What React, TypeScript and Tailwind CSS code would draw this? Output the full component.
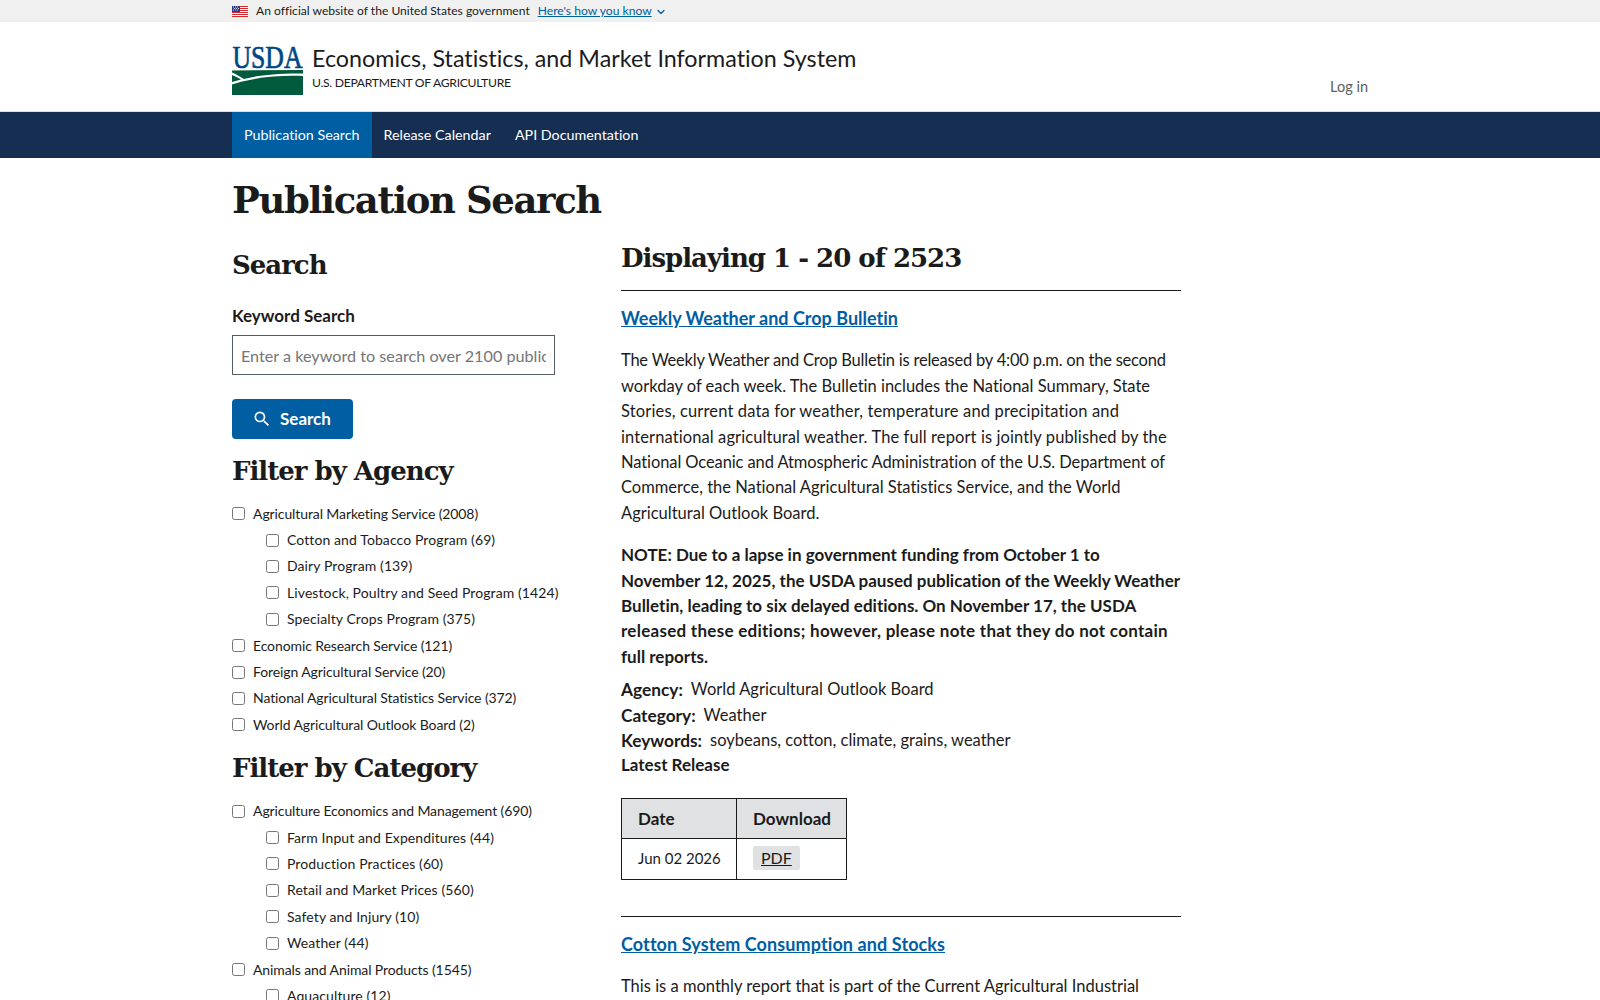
import { ChevronDown } from "lucide-react";

const sans = "font-['Lato',sans-serif] [font-variant-ligatures:none]";
const h2 = "font-['DejaVu_Serif',serif] font-bold text-[26px] tracking-[-1px] leading-[36px]";

type FilterItem = { label: string; nested?: boolean };

const agencies: FilterItem[] = [
  { label: "Agricultural Marketing Service (2008)" },
  { label: "Cotton and Tobacco Program (69)", nested: true },
  { label: "Dairy Program (139)", nested: true },
  { label: "Livestock, Poultry and Seed Program (1424)", nested: true },
  { label: "Specialty Crops Program (375)", nested: true },
  { label: "Economic Research Service (121)" },
  { label: "Foreign Agricultural Service (20)" },
  { label: "National Agricultural Statistics Service (372)" },
  { label: "World Agricultural Outlook Board (2)" },
];

const categories: FilterItem[] = [
  { label: "Agriculture Economics and Management (690)" },
  { label: "Farm Input and Expenditures (44)", nested: true },
  { label: "Production Practices (60)", nested: true },
  { label: "Retail and Market Prices (560)", nested: true },
  { label: "Safety and Injury (10)", nested: true },
  { label: "Weather (44)", nested: true },
  { label: "Animals and Animal Products (1545)" },
  { label: "Aquaculture (12)", nested: true },
];

function Flag() {
  return (
    <svg width="16" height="11" viewBox="0 0 16 11" className="shrink-0">
      <rect width="16" height="11" fill="#fff" />
      <rect y="0" width="16" height="1" fill="#d02c2f" />
      <rect y="2" width="16" height="1" fill="#d02c2f" />
      <rect y="4" width="16" height="1" fill="#d02c2f" />
      <rect y="6" width="16" height="1" fill="#d02c2f" />
      <rect y="8" width="16" height="1" fill="#d02c2f" />
      <rect y="10" width="16" height="1" fill="#d02c2f" />
      <rect width="8" height="6" fill="#2e3a8c" />
      <path d="M1 1h1M3 1h1M5 1h1M2 2.5h1M4 2.5h1M6 2.5h1M1 4h1M3 4h1M5 4h1" stroke="#fff" strokeWidth="0.8" />
    </svg>
  );
}

function UsdaLogo() {
  return (
    <svg width="72" height="49" viewBox="0 0 72 49" className="shrink-0 overflow-visible">
      <text
        x="0.5"
        y="21.5"
        fontFamily="'Liberation Serif', serif"
        fontSize="32"
        textLength="70"
        lengthAdjust="spacingAndGlyphs"
        fill="#004785"
        stroke="#004785"
        strokeWidth="0.7"
      >
        USDA
      </text>
      <path d="M0 24.5 L71 24 V27.5 C45 27 25 29.5 12 33 C8 30.5 4 28 0 26.5 Z" fill="#005a3c" />
      <path d="M0 29 C3 30 6 31.5 9 33.5 L0 36 Z" fill="#005a3c" />
      <path d="M0 49 V38.5 C20 32 45 29 71 30 V49 Z" fill="#005a3c" />
    </svg>
  );
}

function FilterRow({ label, nested }: FilterItem) {
  return (
    <label
      className={`flex items-center h-[26.4px] text-[14px] text-[#1b1b1b] ${
        nested ? "pl-[34px] tracking-[0.1px]" : "tracking-[-0.1px]"
      }`}
    >
      <input type="checkbox" className="w-[13px] h-[13px] mr-2 mt-[1px] shrink-0" />
      <span>{label}</span>
    </label>
  );
}

function Meta({ name, value }: { name: string; value: string }) {
  return (
    <div className="flex h-[25.4px] items-center">
      <strong className="font-bold text-[17.3px] mr-2">{name}:</strong>
      <span className="text-[16.5px]">{value}</span>
    </div>
  );
}

export default function App() {
  return (
    <div className={`${sans} h-[1000px] overflow-hidden bg-white text-[#1b1b1b]`}>
      <div className="h-[22px] bg-[#f0f0f0]">
        <div className="w-[1136px] ml-[232px] h-full flex items-center text-[12.1px] pt-[1px]">
          <Flag />
          <span className="ml-2">An official website of the United States government</span>
          <a href="#" className="ml-2 text-[#005ea2] underline">Here's how you know</a>
          <ChevronDown size={12} strokeWidth={2.5} className="ml-[3px] text-[#005ea2]" />
        </div>
      </div>

      <header className="h-[90px] border-b border-[#dfe1e2]">
        <div className="w-[1136px] ml-[232px] h-full flex">
          <div className="flex mt-6">
            <UsdaLogo />
            <div className="ml-2">
              <div className="text-[23.3px] leading-[28px] mt-[-2px]">Economics, Statistics, and Market Information System</div>
              <div className="text-[12.2px] tracking-[-0.3px] leading-[18px] mt-[2px]">U.S. DEPARTMENT OF AGRICULTURE</div>
            </div>
          </div>
          <a href="#" className="ml-auto mt-[54px] h-[22px] text-[14.5px] text-[#5c5c5c]">Log in</a>
        </div>
      </header>

      <nav className="h-[46px] bg-[#162e51]">
        <div className="w-[1136px] ml-[232px] h-full flex text-[14.3px] text-white">
          <a href="#" className="flex items-center px-3 pb-[1px] bg-[#005ea2]">Publication Search</a>
          <a href="#" className="flex items-center px-3 pb-[1px]">Release Calendar</a>
          <a href="#" className="flex items-center px-3 pb-[1px]">API Documentation</a>
        </div>
      </nav>

      <main className="w-[1136px] ml-[232px]">
        <h1 className="font-['DejaVu_Serif',serif] font-bold text-[37px] tracking-[-1.4px] leading-[48px] mt-[18px]">Publication Search</h1>
        <div className="flex mt-[9px]">
          <aside className="w-[389px] shrink-0">
            <h2 className={`${h2} mt-[14px]`}>Search</h2>
            <label className="block font-bold text-[17px] leading-[26px] mt-[20px]">Keyword Search</label>
            <input
              type="text"
              placeholder="Enter a keyword to search over 2100 publications"
              className="block w-[323px] h-10 mt-[6px] px-2 border border-[#565c65] text-[16.2px] outline-none placeholder:text-[#757575]"
            />
            <button className="flex items-center w-[121px] h-10 mt-6 pl-[19.5px] rounded-[4px] bg-[#005ea2] text-white font-bold text-[17px]">
              <svg width="20" height="20" viewBox="0 0 24 24" fill="currentColor">
                <path d="M15.5 14h-.79l-.28-.27A6.471 6.471 0 0 0 16 9.5 6.5 6.5 0 1 0 9.5 16c1.61 0 3.09-.59 4.23-1.57l.27.28v.79l5 4.99L20.49 19l-4.99-5zm-6 0C7.01 14 5 11.99 5 9.5S7.01 5 9.5 5 14 7.01 14 9.5 11.99 14 9.5 14z" />
              </svg>
              <span className="ml-[8.5px]">Search</span>
            </button>
            <h2 className={`${h2} mt-[14px]`}>Filter by Agency</h2>
            <div className="mt-[11px]">
              {agencies.map((f) => (
                <FilterRow key={f.label} {...f} />
              ))}
            </div>
            <h2 className={`${h2} mt-[12px]`}>Filter by Category</h2>
            <div className="mt-[12px]">
              {categories.map((f) => (
                <FilterRow key={f.label} {...f} />
              ))}
            </div>
          </aside>

          <section className="w-[560px] text-[16.5px] leading-[25.4px]">
            <h2 className={`${h2} mt-[7px]`}>Displaying 1 - 20 of 2523</h2>
            <div className="border-t border-[#1b1b1b] mt-[14px]" />
            <a href="#" className="block mt-[15px] font-bold text-[18px] text-[#005ea2] underline">Weekly Weather and Crop Bulletin</a>
            <p className="mt-[17px] whitespace-nowrap">
              <span className="tracking-[-0.22px]">The Weekly Weather and Crop Bulletin is released by 4:00 p.m. on the second</span><br />
              workday of each week. The Bulletin includes the National Summary, State<br />
              <span className="tracking-[0.15px]">Stories, current data for weather, temperature and precipitation and</span><br />
              <span className="tracking-[0.1px]">international agricultural weather. The full report is jointly published by the</span><br />
              <span className="tracking-[-0.1px]">National Oceanic and Atmospheric Administration of the U.S. Department of</span><br />
              Commerce, the National Agricultural Statistics Service, and the World<br />
              Agricultural Outlook Board.
            </p>
            <p className="mt-[16px] font-bold text-[17px] whitespace-nowrap">
              NOTE: Due to a lapse in government funding from October 1 to<br />
              November 12, 2025, the USDA paused publication of the Weekly Weather<br />
              Bulletin, leading to six delayed editions. On November 17, the USDA<br />
              <span className="tracking-[0.27px]">released these editions; however, please note that they do not contain</span><br />
              full reports.
            </p>
            <div className="mt-[8px]">
              <Meta name="Agency" value="World Agricultural Outlook Board" />
              <Meta name="Category" value="Weather" />
              <Meta name="Keywords" value="soybeans, cotton, climate, grains, weather" />
              <div className="font-bold text-[17px] h-[25.4px] mt-[-1px]">Latest Release</div>
            </div>
            <table className="mt-5 border-collapse table-fixed w-[225px]">
              <thead>
                <tr className="bg-[#dfe1e2]">
                  <th className="h-10 w-[115px] px-4 border border-[#1b1b1b] text-left text-[17px] font-bold">Date</th>
                  <th className="h-10 w-[110px] px-4 border border-[#1b1b1b] text-left text-[17px] font-bold whitespace-nowrap">Download</th>
                </tr>
              </thead>
              <tbody>
                <tr>
                  <td className="h-[41px] px-4 border border-[#1b1b1b] text-[15px] whitespace-nowrap">Jun 02 2026</td>
                  <td className="h-[41px] px-4 border border-[#1b1b1b]">
                    <a href="#" className="inline-block h-6 leading-6 px-2 rounded-[2px] bg-[#dfe1e2] text-[16px] underline">PDF</a>
                  </td>
                </tr>
              </tbody>
            </table>
            <div className="border-t border-[#1b1b1b] mt-9" />
            <a href="#" className="block mt-[15px] font-bold text-[18px] tracking-[0.1px] text-[#005ea2] underline">Cotton System Consumption and Stocks</a>
            <p className="mt-[17px] whitespace-nowrap">This is a monthly report that is part of the Current Agricultural Industrial</p>
          </section>
        </div>
      </main>
    </div>
  );
}
